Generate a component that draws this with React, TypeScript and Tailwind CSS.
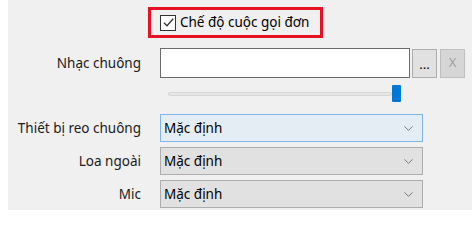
import { ChevronDown } from 'lucide-react'

const font = { fontFamily: '"Noto Sans", "Open Sans", sans-serif' }

function Row({ label, children, className = '' }: { label: string; children: React.ReactNode; className?: string }) {
  return (
    <div className={`flex items-center ${className}`}>
      <div className="w-[133px] shrink-0 text-right text-[13.5px] text-[#1b1b1b] pr-0">{label}</div>
      <div className="ml-[19px] flex items-center">{children}</div>
    </div>
  )
}

function Select({ active = false }: { active?: boolean }) {
  return (
    <div
      className={`flex h-[28px] w-[263px] items-center justify-between border pl-[3px] pr-[6px] text-[13.5px] text-black ${
        active ? 'border-[#7eb4ea] bg-[#e5edf4]' : 'border-[#adadad] bg-[#e1e1e1]'
      }`}
    >
      <span>Mặc định</span>
      <ChevronDown size={15} strokeWidth={1.3} className="text-[#606060]" />
    </div>
  )
}

export default function App() {
  return (
    <div className="h-[218px] w-[475px] bg-white" style={font}>
      <div className="ml-[8px] h-[210px] w-[464px] bg-[#f0f0f0] pt-[7px]">
        <div className="ml-[140px] flex h-[31px] w-[175px] items-center border-[3px] border-[#e81123] pl-[9px]">
          <div className="flex h-[16px] w-[16px] items-center justify-center border border-[#333] bg-white">
            <svg width="13" height="13" viewBox="0 0 13 13">
              <path d="M2 6.8 L5 9.8 L11.2 2.8" fill="none" stroke="#333" strokeWidth="1.3" />
            </svg>
          </div>
          <span className="ml-[4px] text-[13.5px] text-black">Chế độ cuộc gọi đơn</span>
        </div>

        <Row label="Nhạc chuông" className="mt-[10px]">
          <div className="h-[30px] w-[250px] border border-[#6b6b6b] bg-white" />
          <div className="ml-[2px] flex h-[29px] w-[25px] items-end justify-center border border-[#adadad] bg-[#e1e1e1] pb-[6px] text-[13px] leading-none text-black">
            ...
          </div>
          <div className="ml-[3px] flex h-[29px] w-[25px] items-center justify-center border border-[#bfbfbf] bg-[#d6d6d6] text-[13px] text-[#a0a0a0]">
            X
          </div>
        </Row>

        <div className="ml-[160px] mt-[7px] flex h-[17px] w-[233px] items-center">
          <div className="h-[4px] w-[224px] rounded-sm border border-[#d6d6d6] bg-[#e7e7e7]" />
          <div className="h-[17px] w-[9px] rounded-[1px] bg-[#0078d7]" />
        </div>

        <Row label="Thiết bị reo chuông" className="mt-[12px]">
          <Select active />
        </Row>
        <Row label="Loa ngoài" className="mt-[5px]">
          <Select />
        </Row>
        <Row label="Mic" className="mt-[5px]">
          <Select />
        </Row>
      </div>
    </div>
  )
}
